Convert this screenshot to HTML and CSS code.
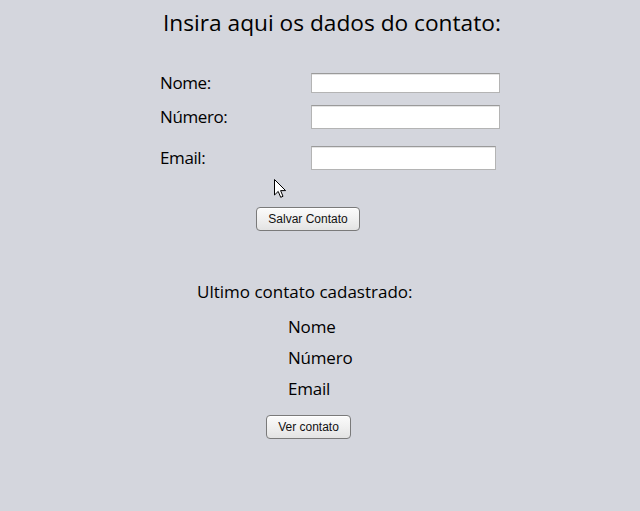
FILE: index.html
```html
<!DOCTYPE html>
<html lang="pt">
<head>
<meta charset="utf-8">
<title>Contato</title>
<link rel="stylesheet" href="styles.css">
</head>
<body>
<main class="app">
  <h1 class="title">Insira aqui os dados do contato:</h1>
  <div class="form">
    <div class="row r1"><label class="lbl">Nome:</label><input class="field w1" type="text"></div>
    <div class="row r2"><label class="lbl">Número:</label><input class="field w1 tall" type="text"></div>
    <div class="row r3"><label class="lbl">Email:</label><input class="field w2 tall" type="text"></div>
  </div>
  <div class="btn-row save-row"><button class="btn save">Salvar Contato</button></div>
  <h2 class="last-title">Ultimo contato cadastrado:</h2>
  <div class="info">
    <p class="info-item">Nome</p>
    <p class="info-item">Número</p>
    <p class="info-item">Email</p>
  </div>
  <div class="btn-row view-row"><button class="btn view">Ver contato</button></div>
  <svg class="cursor" width="13" height="20" viewBox="0 0 13 20">
    <path d="M0.5 0.5 L0.5 16 L4.2 12.4 L6.7 18.3 L9 17.3 L6.6 11.6 L11.6 11.6 Z" fill="#fff" stroke="#000" stroke-width="1" stroke-linejoin="miter"/>
  </svg>
</main>
</body>
</html>
```
FILE: styles.css
```css
html, body {
  margin: 0;
  padding: 0;
  background: #d4d6dd;
}
body {
  font-family: "Open Sans", "Noto Sans", sans-serif;
  color: #000;
  width: 640px;
  height: 511px;
  overflow: hidden;
}
.app {
  position: relative;
  display: flex;
  flex-direction: column;
  padding-top: 8px;
}
.title {
  margin: 0 0 0 163px;
  font-size: 22.7px;
  font-weight: 400;
  line-height: 30px;
}
.form {
  display: flex;
  flex-direction: column;
  padding-left: 160px;
  margin-top: 35px;
}
.row {
  display: flex;
  align-items: center;
}
.r2 { margin-top: 12px; }
.r3 { margin-top: 17px; }
.lbl {
  width: 151px;
  font-size: 17px;
  letter-spacing: -0.4px;
  line-height: 20px;
}
.field {
  box-sizing: border-box;
  height: 20px;
  margin: 0;
  padding: 0 4px;
  background: #fff;
  border: 1px solid #b4b4b4;
  border-top-color: #9a9a9a;
  box-shadow: inset 0 1px 0 #e4e4e4;
  border-radius: 0;
  outline: none;
}
.tall { height: 24px; }
.w1 { width: 189px; }
.w2 { width: 185px; }
.btn-row {
  display: flex;
}
.save-row {
  margin-top: 37px;
  padding-left: 256px;
}
.view-row {
  margin-top: 11px;
  padding-left: 266px;
}
.btn {
  box-sizing: border-box;
  height: 24px;
  margin: 0;
  padding: 0;
  font-family: "Liberation Sans", Arial, sans-serif;
  font-size: 12px;
  color: #111;
  border: 1px solid #7a7a7a;
  border-radius: 4px;
  background: linear-gradient(#fbfbfb, #f0f0f0 50%, #e3e3e3);
  box-shadow: inset 0 1px 0 #fff;
}
.save { width: 104px; }
.view { width: 85px; }
.last-title {
  margin: 49px 0 0 197px;
  font-size: 17px;
  font-weight: 400;
  line-height: 24px;
}
.info {
  display: flex;
  flex-direction: column;
  padding-left: 288px;
  margin-top: 7px;
}
.info-item {
  margin: 0;
  font-size: 17px;
  line-height: 31px;
  letter-spacing: -0.2px;
}
.cursor {
  position: absolute;
  left: 274px;
  top: 179px;
}
```
